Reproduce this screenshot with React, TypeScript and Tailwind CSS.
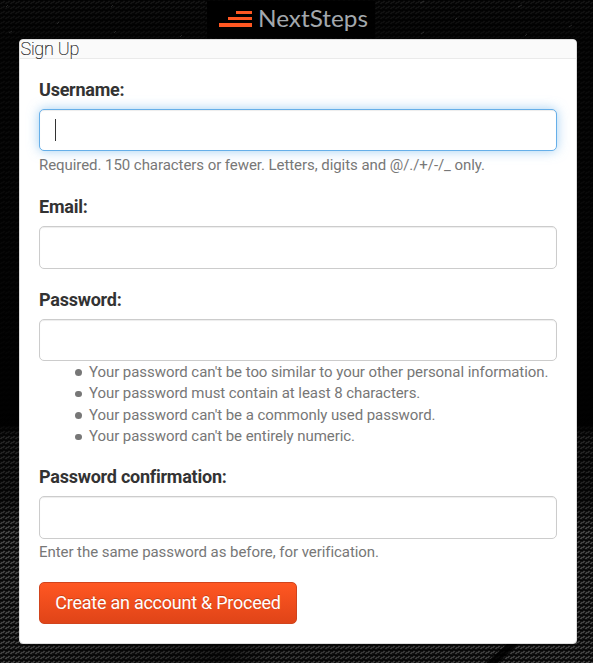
import React from "react";

const SPECKS = [
  [111, 6, 2], [57, 23, 2], [9, 32, 3], [114, 32, 2], [6, 6, 2], [180, 36, 2],
  [420, 2, 4], [518, 6, 4], [421, 33, 3], [525, 35, 2], [569, 26, 3], [455, 19, 2],
];

function Backdrop() {
  return (
    <svg className="absolute inset-0 -z-10" width="593" height="663" aria-hidden="true">
      <defs>
        <pattern id="weave" width="5" height="5" patternUnits="userSpaceOnUse">
          <rect width="5" height="5" fill="#141414" />
          <path d="M0 3.5h2M1 2.5h3M3 1.5h2" stroke="#484848" strokeWidth="1" />
          <path d="M0 0.5h3M3 4.5h2" stroke="#060606" strokeWidth="1" />
        </pattern>
        <linearGradient id="shade" x1="0" y1="0" x2="0" y2="1">
          <stop offset="0" stopColor="#000" stopOpacity="0.72" />
          <stop offset="0.06" stopColor="#000" stopOpacity="0.86" />
          <stop offset="0.3" stopColor="#000" stopOpacity="0.88" />
          <stop offset="0.64" stopColor="#000" stopOpacity="0.98" />
          <stop offset="0.66" stopColor="#000" stopOpacity="0.5" />
          <stop offset="0.75" stopColor="#000" stopOpacity="0.55" />
          <stop offset="0.8" stopColor="#000" stopOpacity="0.05" />
          <stop offset="1" stopColor="#000" stopOpacity="0.1" />
        </linearGradient>
        <linearGradient id="dim" x1="0" y1="0" x2="1" y2="0">
          <stop offset="0" stopColor="#000" stopOpacity="0" />
          <stop offset="0.3" stopColor="#000" stopOpacity="0.4" />
          <stop offset="0.38" stopColor="#000" stopOpacity="0.6" />
          <stop offset="0.46" stopColor="#000" stopOpacity="0.2" />
          <stop offset="1" stopColor="#000" stopOpacity="0" />
        </linearGradient>
      </defs>
      <rect width="593" height="663" fill="url(#weave)" />
      <rect width="593" height="663" fill="url(#shade)" />
      <rect y="643" width="593" height="20" fill="url(#dim)" />
      <path d="M508 643h11l-21 20h-12z" fill="#000" fillOpacity="0.85" />
      <path d="M577 459h16M577 474h16" stroke="#000" />
      {SPECKS.map(([x, y, w]) => (
        <path key={`${x}-${y}`} d={`M${x} ${y + 1}l${w} -2`} stroke="#777" strokeOpacity="0.3" />
      ))}
    </svg>
  );
}

function Logo() {
  return (
    <svg className="block" width="168" height="37" viewBox="0 0 168 37" role="img" aria-label="NextSteps">
      <rect width="168" height="37" fill="#000" />
      <path d="M29 10h16v3H29zM21 16h24v3H21zM12 22h33v4H12z" fill="#ff5722" />
      <text
        x="51"
        y="26"
        fontSize="23"
        textLength="110"
        lengthAdjust="spacingAndGlyphs"
        fill="#a3a8ad"
        className="font-['Lato','Open_Sans',sans-serif]"
      >
        NextSteps
      </text>
    </svg>
  );
}

const inputStyle =
  "block w-full rounded-[5px] border border-[#ccc] bg-white px-[15px] text-lg text-[#333] shadow-[inset_0_1px_1px_rgba(0,0,0,0.075)] outline-none";
const labelStyle = "mb-[6px] block h-[26px] text-[18px] leading-[26px] font-bold tracking-[-0.24px] text-[#333]";
const helpStyle = "text-[15px] leading-[22px] tracking-[-0.06px] text-[#777]";

const RULES = [
  "Your password can't be too similar to your other personal information.",
  "Your password must contain at least 8 characters.",
  "Your password can't be a commonly used password.",
  "Your password can't be entirely numeric.",
];

export default function App() {
  return (
    <main className="relative isolate flex h-[663px] w-[593px] flex-col overflow-hidden bg-black font-['Roboto',sans-serif]">
      <Backdrop />
      <header className="flex h-[39px] shrink-0 pt-[1px] pl-[207px]">
        <Logo />
      </header>
      <section className="ml-[19px] h-[605px] w-[558px] rounded-[4px] border border-[#ddd] bg-white">
        <h1 className="h-[19px] rounded-t-[3px] border-b border-[#eaeaea] bg-[#fafafa] pl-[0.5px] text-[18px] leading-[18px] font-thin tracking-[-0.24px] text-black [-webkit-text-stroke:0.2px_#222]">
          Sign Up
        </h1>
        <form className="px-[19px] pt-[18px]" onSubmit={(e) => e.preventDefault()}>
          <div className="h-[117px]">
            <label className={labelStyle}>Username:</label>
            <div className="flex h-[42px] items-center rounded-[5px] border border-[#66afe9] bg-white px-[15px] shadow-[inset_0_1px_1px_rgba(0,0,0,0.075),0_0_12px_rgba(102,175,233,0.6)]">
              <span className="h-[22px] w-px bg-[#333]" />
            </div>
            <p className={`${helpStyle} mt-[3px]`}>Required. 150 characters or fewer. Letters, digits and @/./+/-/_ only.</p>
          </div>
          <div className="h-[93px]">
            <label className={labelStyle} htmlFor="email">Email:</label>
            <input id="email" className={`${inputStyle} h-[43px]`} />
          </div>
          <div className="h-[177px]">
            <label className={labelStyle} htmlFor="password">Password:</label>
            <input id="password" type="password" className={`${inputStyle} h-[42px]`} />
            <ul className="pt-px pl-[36px] text-[15px] leading-[21.43px] tracking-[-0.06px] text-[#777]">
              {RULES.map((rule) => (
                <li key={rule} className="flex items-center gap-[7.5px]">
                  <span className="size-[6.5px] shrink-0 rounded-full bg-[#777]" />
                  <span className="whitespace-nowrap">{rule}</span>
                </li>
              ))}
            </ul>
          </div>
          <div className="h-[118px]">
            <label className={labelStyle} htmlFor="confirm">Password confirmation:</label>
            <input id="confirm" type="password" className={`${inputStyle} h-[43px]`} />
            <p className={`${helpStyle} mt-[2px]`}>Enter the same password as before, for verification.</p>
          </div>
          <button
            type="submit"
            className="block h-[42px] w-[258px] rounded-[5px] border border-[#d1441d] bg-linear-to-b from-[#ff5722] to-[#e04418] text-[18px] leading-[40px] tracking-[-0.25px] whitespace-nowrap text-white [text-shadow:0_-1px_0_rgba(0,0,0,0.2)]"
          >
            Create an account &amp; Proceed
          </button>
        </form>
      </section>
    </main>
  );
}
